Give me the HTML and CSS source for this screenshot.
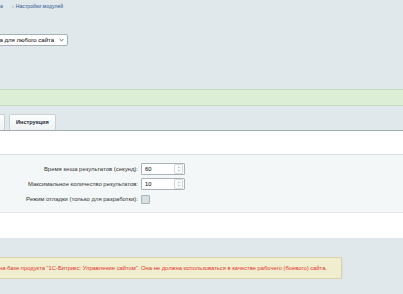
FILE: index.html
```
<!DOCTYPE html>
<html lang="ru">
<head>
    <meta charset="UTF-8">
    <meta name="viewport" content="width=device-width, initial-scale=1.0">
    <title>Настройки модулей</title>
    <link rel="stylesheet" href="styles.css">
</head>
<body>

    <div class="crumbs">
        <a href="#" class="crumb crumb-first">Настройки продукта</a>
        <span class="crumb-sep">›</span>
        <a href="#" class="crumb">Настройки модулей</a>
    </div>

    <div class="site-select">
        <span class="site-select-text">Общая зона для любого сайта</span>
        <svg class="site-select-arrow" width="5" height="4" viewBox="0 0 5 4">
            <path d="M0.6 1 L2.5 2.9 L4.4 1" fill="none" stroke="#555" stroke-width="0.9"/>
        </svg>
    </div>

    <div class="note"></div>

    <div class="tabs">
        <div class="tab tab-cut">Поиск</div>
        <div class="tab">Инструкция</div>
    </div>

    <div class="tab-body">
        <div class="blank blank-top"></div>
        <div class="settings">
            <div class="row">
                <label class="row-label" for="cacheTime">Время кеша результатов (секунд):</label>
                <div class="spin">
                    <input type="text" id="cacheTime" value="60">
                    <span class="spin-arrows">
                        <svg width="4" height="6" viewBox="0 0 4 6"><path d="M0.6 2.2 L2 0.8 L3.4 2.2 M0.6 3.8 L2 5.2 L3.4 3.8" fill="none" stroke="#9aa4a9" stroke-width="0.7"/></svg>
                    </span>
                </div>
            </div>
            <div class="row">
                <label class="row-label" for="maxCount">Максимальное количество результатов:</label>
                <div class="spin">
                    <input type="text" id="maxCount" value="10">
                    <span class="spin-arrows">
                        <svg width="4" height="6" viewBox="0 0 4 6"><path d="M0.6 2.2 L2 0.8 L3.4 2.2 M0.6 3.8 L2 5.2 L3.4 3.8" fill="none" stroke="#9aa4a9" stroke-width="0.7"/></svg>
                    </span>
                </div>
            </div>
            <div class="row">
                <label class="row-label" for="debugMode">Режим отладки (только для разработки):</label>
                <span class="check" id="debugMode"></span>
            </div>
        </div>
        <div class="blank blank-bottom"></div>
    </div>

    <div class="warning">
        <span>Данный сайт создан на базе продукта "1С-Битрикс: Управление сайтом". Она не должна использоваться в качестве рабочего (боевого) сайта.</span>
    </div>

</body>
</html>
```

FILE: styles.css
```
body {
    margin: 0;
    background: #e1e8eb;
    font-family: "Liberation Sans", Arial, sans-serif;
    font-size: 5.8px;
    color: #2e2e2e;
    overflow: hidden;
}

/* breadcrumbs, cut on the left edge of the window */
.crumbs {
    display: flex;
    align-items: center;
    height: 8px;
    margin: 2px 0 0 -60px;
    white-space: nowrap;
    font-size: 5.2px;
}

.crumb {
    color: #2c5c93;
    text-decoration: none;
}

.crumb-first {
    display: flex;
    justify-content: flex-end;
    width: 63px;
}

.crumb-sep {
    margin: 0 2px 0 9px;
    color: #8a9499;
}

.site-select {
    display: flex;
    align-items: center;
    justify-content: flex-end;
    gap: 5px;
    width: 110px;
    height: 12px;
    margin: 24px 0 0 -42px;
    padding: 0 3px 0 4px;
    box-sizing: border-box;
    background: #fff;
    border: 1px solid #a6b1b6;
    border-radius: 2px;
    color: #000;
    font-size: 6px;
    white-space: nowrap;
}

.note {
    height: 15px;
    margin-top: 43px;
    background: #dcefd6;
    border-top: 1px solid #c6d9c1;
    border-bottom: 1px solid #c6d9c1;
}

.tabs {
    display: flex;
    gap: 4px;
    margin: 8px 0 0 -40px;
    height: 16px;
    border-bottom: 1px solid #a3acb0;
}

.tab {
    padding: 0 6px;
    line-height: 15px;
    background: linear-gradient(#fdfefe, #eef2f3);
    border: 1px solid #c7d0d4;
    border-bottom: none;
    border-radius: 2px 2px 0 0;
    font-weight: bold;
    font-size: 5.6px;
    color: #1f2c3d;
    white-space: nowrap;
}

.tab-cut {
    width: 45px;
    box-sizing: border-box;
}

.tab-body {
    background: #fff;
}

.blank-top {
    height: 23px;
}

.blank-bottom {
    height: 25px;
}

.settings {
    padding: 8px 0 7px;
    background: #f4f7f8;
    border-top: 1px solid #dbe0e2;
    border-bottom: 1px solid #e4e9eb;
    display: flex;
    flex-direction: column;
    gap: 3px;
}

.row {
    display: grid;
    grid-template-columns: 138px auto;
    column-gap: 3px;
    align-items: center;
    min-height: 12px;
}

.row-label {
    text-align: right;
    color: #333;
    font-size: 5.95px;
    white-space: nowrap;
}

.spin {
    display: flex;
    align-items: center;
    width: 44px;
    height: 12px;
    box-sizing: border-box;
    background: #fff;
    border: 1px solid #a9b4b9;
    border-radius: 1px;
}

.spin input {
    flex: 1;
    min-width: 0;
    border: none;
    padding: 0 0 0 3px;
    font: inherit;
    color: #000;
    background: transparent;
    outline: none;
}

.spin-arrows {
    display: flex;
    align-items: center;
    justify-content: center;
    width: 7px;
    height: 8px;
    margin-right: 1px;
    border: 1px solid #d3d9dc;
    border-radius: 1px;
}

.check {
    width: 7px;
    height: 7px;
    background: #d8dfe2;
    border: 1px solid #a9b3b8;
    border-radius: 1px;
}

.warning {
    display: flex;
    justify-content: flex-end;
    width: 362px;
    height: 22px;
    align-items: center;
    margin: 19px 0 0 -20px;
    padding-right: 14px;
    box-sizing: border-box;
    background: #f1eecf;
    border: 1px solid #d8d3a8;
    border-radius: 2px;
    box-shadow: 0 1px 2px rgba(0, 0, 0, 0.12);
    color: #e5312e;
    white-space: nowrap;
}
```
